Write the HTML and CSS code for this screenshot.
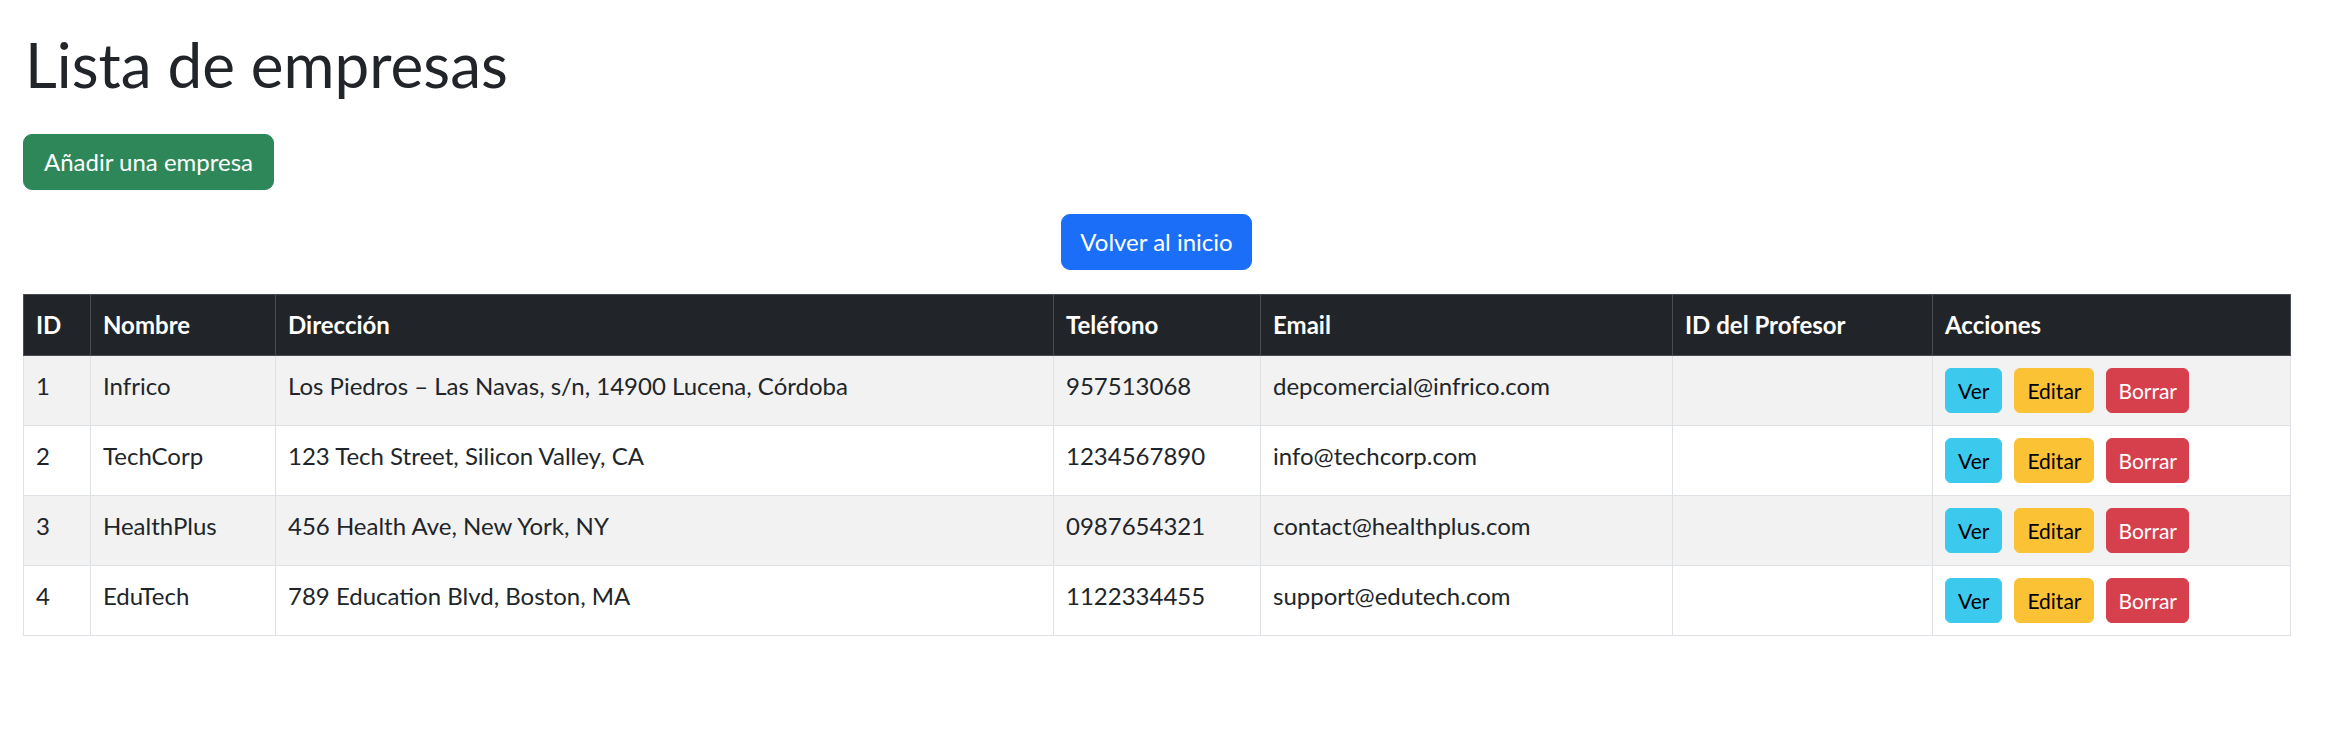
FILE: index.html
```html
<!DOCTYPE html>
<html lang="es">
<head>
<meta charset="utf-8">
<title>Lista de empresas</title>
<link rel="stylesheet" href="styles.css">
</head>
<body>
<main class="page">
  <h1 class="title">Lista de empresas</h1>
  <div class="bar">
    <a class="btn btn-success" href="#">Añadir una empresa</a>
  </div>
  <div class="bar bar-center">
    <a class="btn btn-primary" href="#">Volver al inicio</a>
  </div>
  <table class="table">
    <colgroup>
      <col class="c-id">
      <col class="c-name">
      <col class="c-addr">
      <col class="c-phone">
      <col class="c-mail">
      <col class="c-prof">
      <col class="c-act">
    </colgroup>
    <thead>
      <tr>
        <th>ID</th>
        <th>Nombre</th>
        <th>Dirección</th>
        <th>Teléfono</th>
        <th>Email</th>
        <th>ID del Profesor</th>
        <th>Acciones</th>
      </tr>
    </thead>
    <tbody>
      <tr class="odd">
        <td>1</td>
        <td>Infrico</td>
        <td>Los Piedros – Las Navas, s/n, 14900 Lucena, Córdoba</td>
        <td>957513068</td>
        <td>depcomercial@infrico.com</td>
        <td></td>
        <td><div class="actions"><a class="btn btn-sm btn-info" href="#">Ver</a><a class="btn btn-sm btn-warning" href="#">Editar</a><a class="btn btn-sm btn-danger" href="#">Borrar</a></div></td>
      </tr>
      <tr>
        <td>2</td>
        <td>TechCorp</td>
        <td>123 Tech Street, Silicon Valley, CA</td>
        <td>1234567890</td>
        <td>info@techcorp.com</td>
        <td></td>
        <td><div class="actions"><a class="btn btn-sm btn-info" href="#">Ver</a><a class="btn btn-sm btn-warning" href="#">Editar</a><a class="btn btn-sm btn-danger" href="#">Borrar</a></div></td>
      </tr>
      <tr class="odd">
        <td>3</td>
        <td>HealthPlus</td>
        <td>456 Health Ave, New York, NY</td>
        <td>0987654321</td>
        <td>contact@healthplus.com</td>
        <td></td>
        <td><div class="actions"><a class="btn btn-sm btn-info" href="#">Ver</a><a class="btn btn-sm btn-warning" href="#">Editar</a><a class="btn btn-sm btn-danger" href="#">Borrar</a></div></td>
      </tr>
      <tr>
        <td>4</td>
        <td>EduTech</td>
        <td>789 Education Blvd, Boston, MA</td>
        <td>1122334455</td>
        <td>support@edutech.com</td>
        <td></td>
        <td><div class="actions"><a class="btn btn-sm btn-info" href="#">Ver</a><a class="btn btn-sm btn-warning" href="#">Editar</a><a class="btn btn-sm btn-danger" href="#">Borrar</a></div></td>
      </tr>
    </tbody>
  </table>
</main>
</body>
</html>
```
FILE: styles.css
```css
* { box-sizing: border-box; }

html, body {
  margin: 0;
  background: #ffffff;
}

body {
  font-family: Lato, "Noto Sans", "Liberation Sans", sans-serif;
  font-size: 24px;
  line-height: 36px;
  color: #212529;
}

.page {
  padding: 28px 46px 0 23px;
}

.title {
  margin: 0 0 34px 0;
  font-size: 62px;
  line-height: 72px;
  font-weight: 400;
  color: #212529;
  padding-left: 2px;
}

.bar {
  display: flex;
  margin-bottom: 24px;
}

.bar-center {
  justify-content: center;
}

.btn {
  display: inline-block;
  font-size: 24px;
  line-height: 36px;
  padding: 9px 18px;
  border: 1px solid transparent;
  border-radius: 9px;
  text-decoration: none;
  color: #ffffff;
  white-space: nowrap;
}

.btn-success {
  background: #2d8759;
  border-color: #2d8759;
  color: #ffffff;
  padding-left: 20px;
  padding-right: 20px;
}

.btn-primary {
  background: #1b6ef8;
  border-color: #1b6ef8;
  color: #ffffff;
}

.btn-sm {
  font-size: 21px;
  line-height: 31px;
  padding: 6px 12px;
  border-radius: 6px;
}

.btn-info {
  background: #3bc9ee;
  border-color: #3bc9ee;
  color: #000000;
}

.btn-warning {
  background: #fbc235;
  border-color: #fbc235;
  color: #000000;
}

.btn-danger {
  background: #d6404d;
  border-color: #d6404d;
  color: #ffffff;
  padding-left: 11px;
  padding-right: 11px;
}

.actions {
  display: flex;
  gap: 12px;
}

.table {
  width: 2267px;
  table-layout: fixed;
  border-collapse: collapse;
  color: #212529;
}

.c-id { width: 67px; }
.c-name { width: 185px; }
.c-addr { width: 778px; }
.c-phone { width: 207px; }
.c-mail { width: 412px; }
.c-prof { width: 260px; }
.c-act { width: 358px; }

.table th,
.table td {
  padding: 12px 12px;
  text-align: left;
  vertical-align: top;
  white-space: nowrap;
  overflow: hidden;
}

.table th {
  background: #212529;
  color: #ffffff;
  font-weight: 700;
  border: 1px solid #4a4e52;
}

.table td {
  border: 1px solid #dee2e6;
  background: #ffffff;
}

.table tr.odd td {
  background: #f2f2f2;
}
```
